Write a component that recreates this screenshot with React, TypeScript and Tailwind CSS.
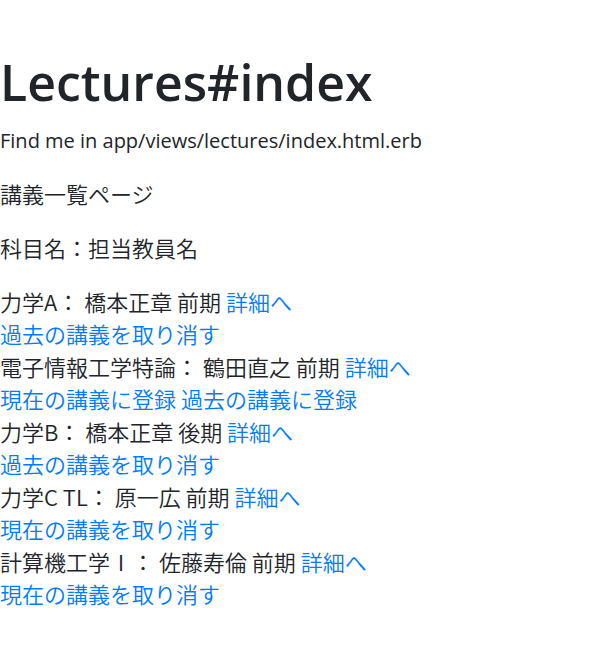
type Lecture = { name: string; teacher: string; term: string; actions: string[] };

const lectures: Lecture[] = [
  { name: "力学A", teacher: "橋本正章", term: "前期", actions: ["過去の講義を取り消す"] },
  { name: "電子情報工学特論", teacher: "鶴田直之", term: "前期", actions: ["現在の講義に登録", "過去の講義に登録"] },
  { name: "力学B", teacher: "橋本正章", term: "後期", actions: ["過去の講義を取り消す"] },
  { name: "力学C TL", teacher: "原一広", term: "前期", actions: ["現在の講義を取り消す"] },
  { name: "計算機工学Ⅰ", teacher: "佐藤寿倫", term: "前期", actions: ["現在の講義を取り消す"] },
];

const link = "text-[#007bff] hover:underline";

export default function App() {
  return (
    <main lang="ja" className="bg-white pt-[50px] font-['Noto_Sans_CJK_JP',sans-serif] text-[22px] leading-[32px] font-[350] text-[#212529]">
      <h1 className="mb-[10px] font-['Open_Sans','Noto_Sans_CJK_JP',sans-serif] text-[50px] leading-[65px] font-semibold">Lectures#index</h1>
      <p className="mb-5 font-['Open_Sans','Noto_Sans_CJK_JP',sans-serif] text-[20px] font-normal">Find me in app/views/lectures/index.html.erb</p>
      <p className="mb-[22px]">講義一覧ページ</p>
      <p className="mb-[22px]">科目名：担当教員名</p>
      <ul className="flex flex-col gap-px">
        {lectures.map((l) => (
          <li key={l.name}>
            <div>
              {l.name}： {l.teacher} {l.term} <a href="#detail" className={link}>詳細へ</a>
            </div>
            <div className="flex gap-[5px]">
              {l.actions.map((a) => (
                <a key={a} href="#register" className={link}>{a}</a>
              ))}
            </div>
          </li>
        ))}
      </ul>
    </main>
  );
}
